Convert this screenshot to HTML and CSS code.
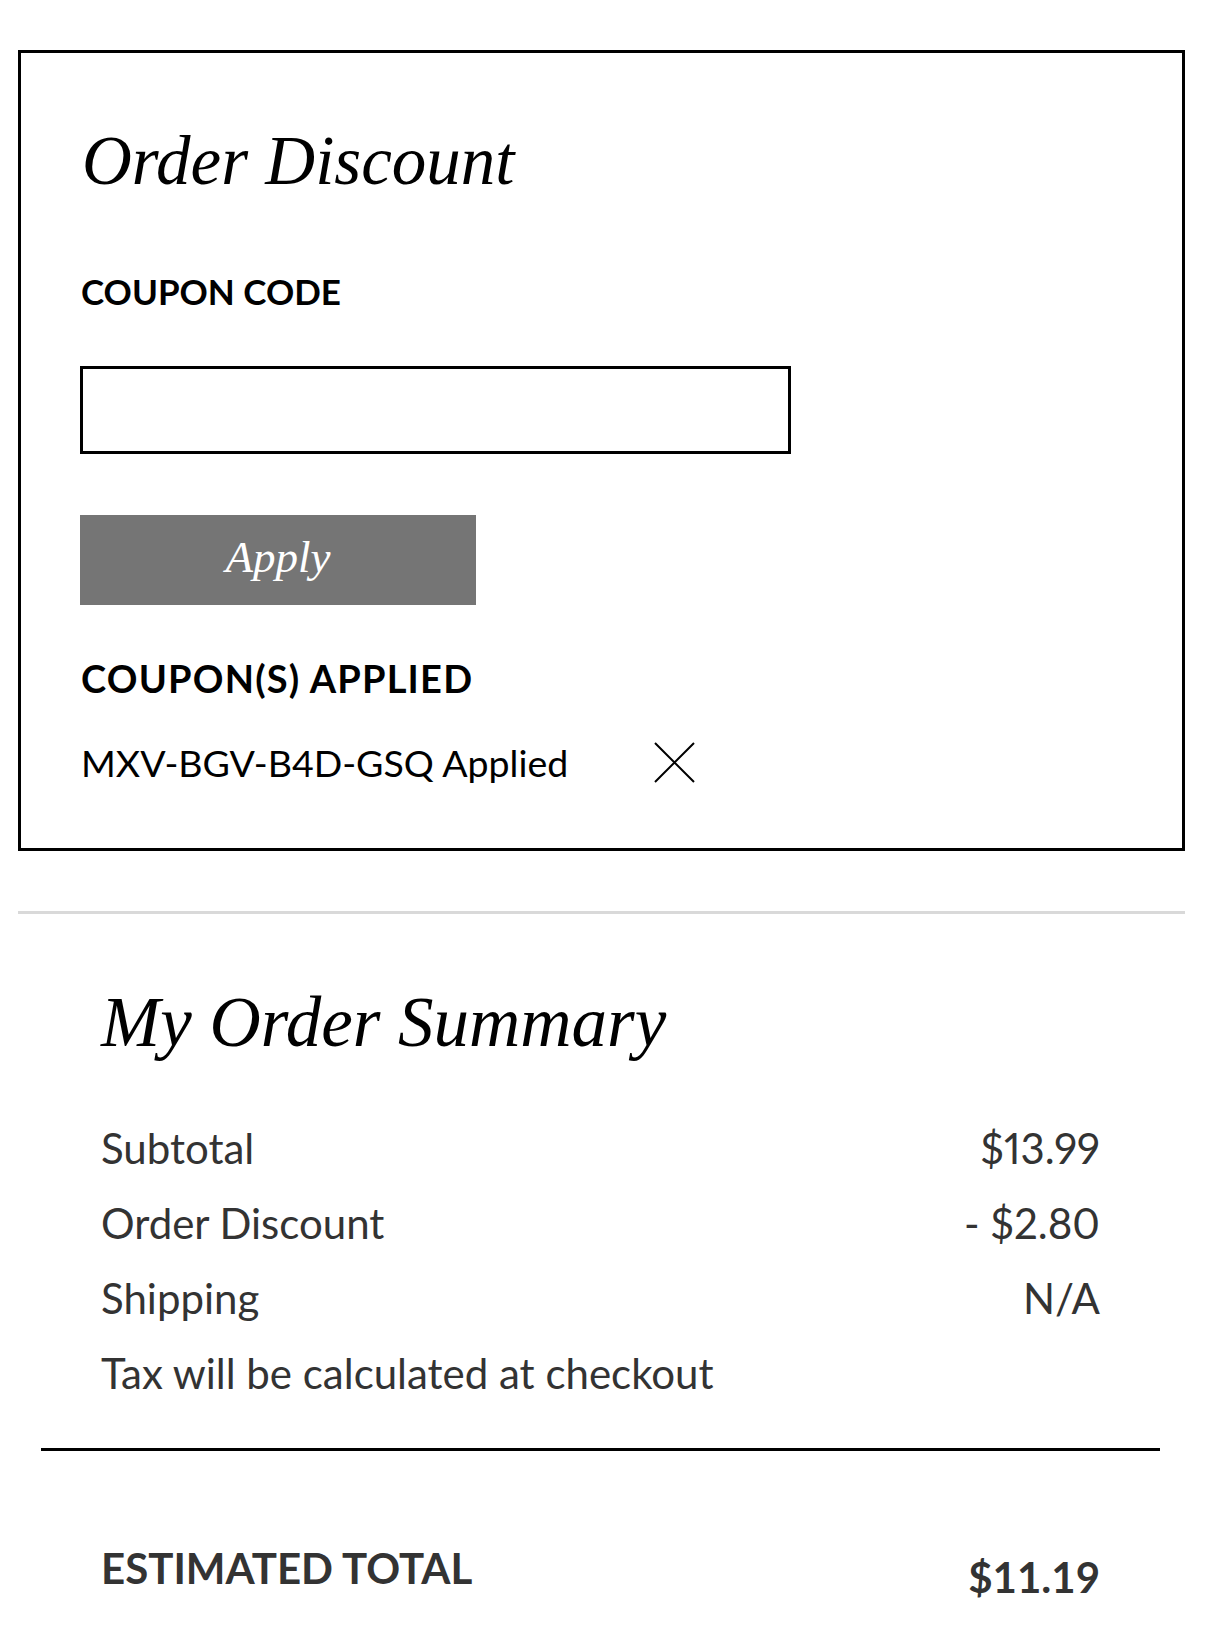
FILE: index.html
```html
<!DOCTYPE html>
<html lang="en">
<head>
<meta charset="utf-8">
<title>Order Discount</title>
<link rel="stylesheet" href="styles.css">
</head>
<body>
<main class="page">
  <section class="discount">
    <h2 class="discount__title">Order Discount</h2>
    <label class="label label--code" for="coupon">COUPON CODE</label>
    <input class="coupon-input" id="coupon" type="text">
    <button class="apply-btn" type="button">Apply</button>
    <div class="label label--applied">COUPON(S) APPLIED</div>
    <div class="applied-row">
      <span class="applied-row__code">MXV-BGV-B4D-GSQ Applied</span>
      <button class="remove-btn" type="button" aria-label="Remove coupon">
        <svg width="41" height="41" viewBox="0 0 41 41"><path d="M1 1 L40 40 M40 1 L1 40" stroke="#000" stroke-width="2" fill="none"/></svg>
      </button>
    </div>
  </section>
  <hr class="divider">
  <section class="summary">
    <h2 class="summary__title">My Order Summary</h2>
    <div class="summary__rows">
      <div class="row"><span>Subtotal</span><span class="row__value">$13.99</span></div>
      <div class="row"><span>Order Discount</span><span class="row__value">- $2.80</span></div>
      <div class="row"><span>Shipping</span><span class="row__value">N/A</span></div>
      <div class="row"><span>Tax will be calculated at checkout</span></div>
    </div>
    <div class="total">
      <span class="total__label">ESTIMATED TOTAL</span>
      <span class="total__value">$11.19</span>
    </div>
  </section>
</main>
</body>
</html>
```

FILE: styles.css
```css
* { box-sizing: border-box; }

html, body {
  margin: 0;
  padding: 0;
  background: #fff;
}

body {
  font-family: "Lato", "Liberation Sans", sans-serif;
  color: #000;
}

.page {
  margin: 50px 37px 0 18px;
}

.discount {
  border: 3px solid #000;
  padding: 74px 40px 62px 59px;
  display: flex;
  flex-direction: column;
  align-items: flex-start;
}

.discount__title {
  margin: 0;
  font-family: "Liberation Serif", "Times New Roman", serif;
  font-style: italic;
  font-weight: 400;
  font-size: 69px;
  line-height: 69px;
  padding-left: 2px;
}

.label {
  display: block;
  font-family: "Lato", sans-serif;
  font-weight: 700;
  font-size: 35px;
  line-height: 43px;
  color: #000;
  padding-left: 1px;
}

.label--code {
  margin-top: 74px;
}

.coupon-input {
  margin-top: 53px;
  width: 711px;
  height: 88px;
  border: 3px solid #000;
  border-radius: 0;
  background: #fff;
  font: inherit;
  outline: none;
}

.apply-btn {
  margin-top: 61px;
  width: 396px;
  height: 90px;
  border: 0;
  border-radius: 0;
  background: #757575;
  color: #fff;
  font-family: "Liberation Serif", "Times New Roman", serif;
  font-style: italic;
  font-size: 45px;
  line-height: 1;
  padding: 0 0 6px 0;
  display: flex;
  align-items: center;
  justify-content: center;
}

.label--applied {
  margin-top: 52px;
  font-size: 38px;
  letter-spacing: 1.2px;
}

.applied-row {
  margin-top: 39px;
  display: flex;
  align-items: center;
}

.applied-row__code {
  font-size: 37.5px;
  line-height: 47px;
  color: #000;
  padding-left: 1px;
}

.remove-btn {
  margin-left: 86px;
  padding: 0;
  border: 0;
  background: none;
  width: 41px;
  height: 41px;
  display: block;
}

.remove-btn svg { display: block; }

.divider {
  margin: 60px 0 0 0;
  border: 0;
  height: 3px;
  background: #d9d9d9;
}

.summary {
  margin: 0 25px 0 23px;
}

.summary__title {
  margin: 73px 0 0 0;
  padding-left: 60px;
  font-family: "Liberation Serif", "Times New Roman", serif;
  font-style: italic;
  font-weight: 400;
  font-size: 71px;
  line-height: 71px;
  color: #000;
}

.summary__rows {
  margin-top: 53px;
  padding: 0 60px;
}

.row {
  display: flex;
  justify-content: space-between;
  font-size: 42px;
  line-height: 75px;
  color: #333;
}

.row__value {
  font-variant-numeric: proportional-nums;
}

.total {
  margin-top: 37px;
  border-top: 3px solid #000;
  padding: 92px 60px 0 60px;
  display: flex;
  justify-content: space-between;
  align-items: flex-start;
  color: #333;
  font-weight: 700;
  font-size: 42px;
  line-height: 50px;
}

.total__value {
  margin-top: 9px;
}
```
